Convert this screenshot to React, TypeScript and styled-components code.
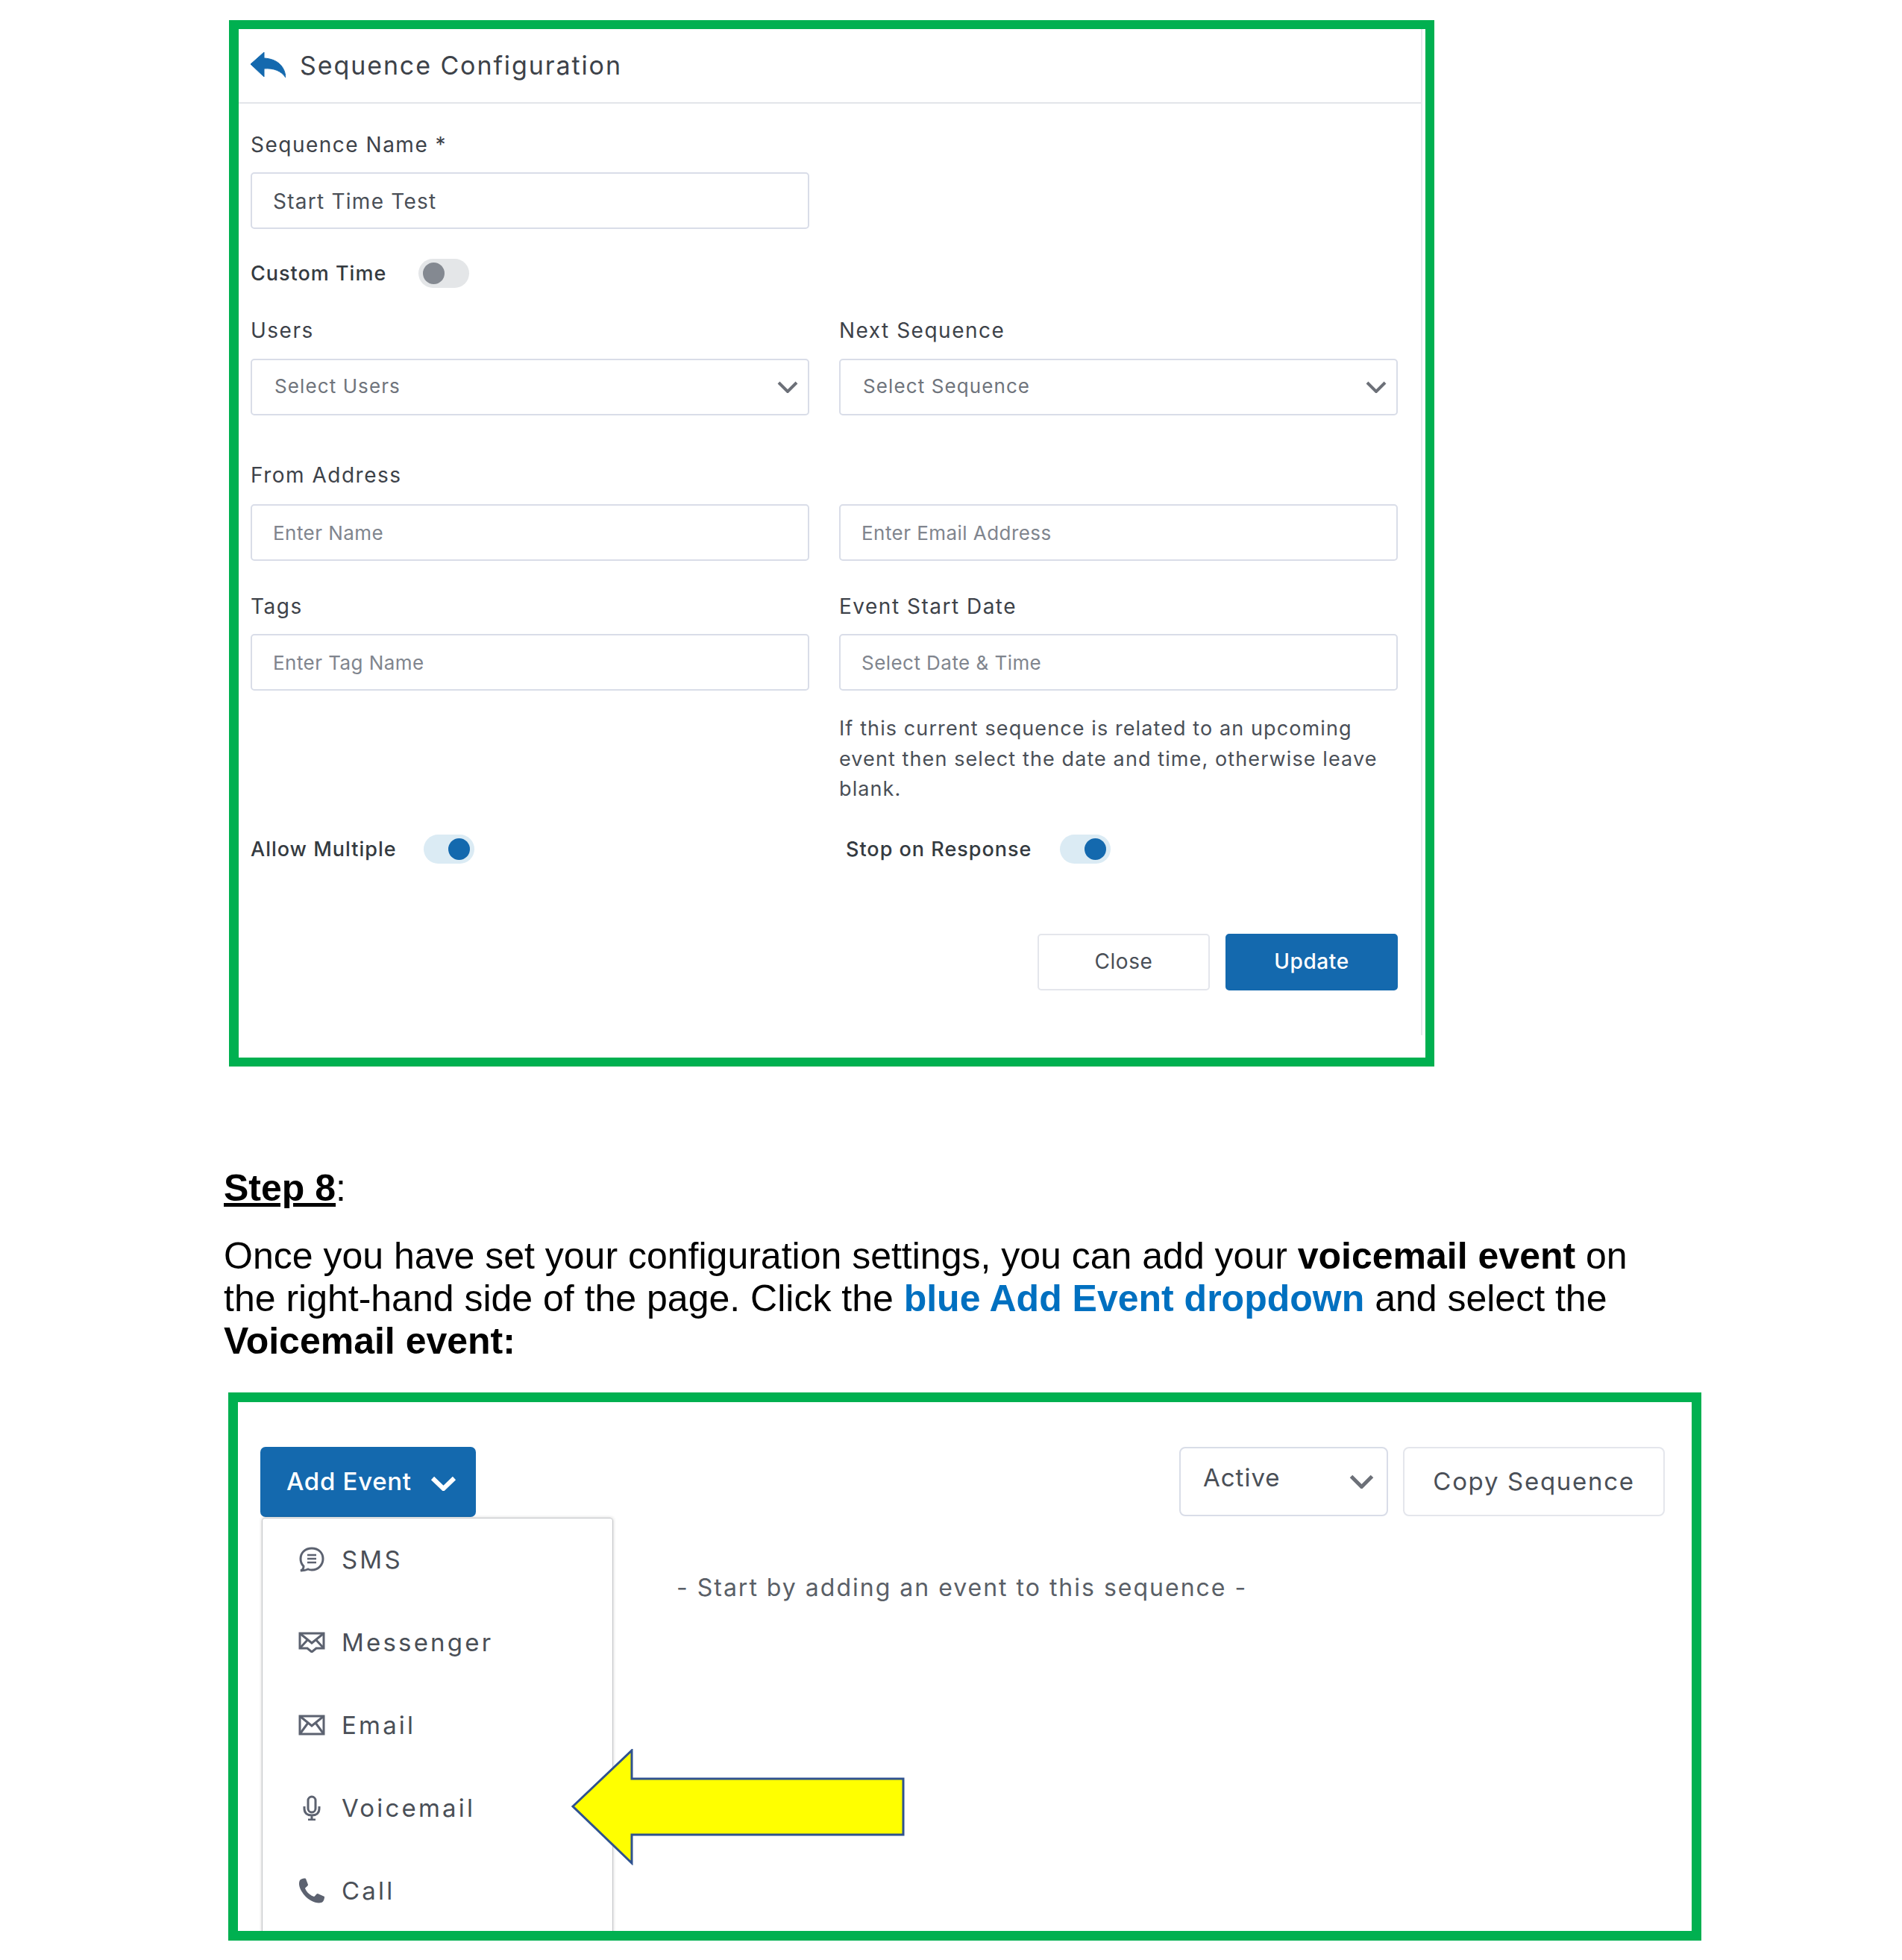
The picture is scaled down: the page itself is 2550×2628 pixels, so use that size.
import React from 'react';
import styled, { createGlobalStyle } from 'styled-components';

const GlobalStyle = createGlobalStyle`
  html, body {
    margin: 0;
    padding: 0;
    background: #fff;
  }
  * {
    box-sizing: border-box;
  }
`;

const Page = styled.div`
  width: 2550px;
  height: 2628px;
  padding-top: 27px;
  overflow: hidden;
  font-family: Inter, 'Noto Sans', sans-serif;
  color: #343a40;
`;

const ConfigShot = styled.section`
  width: 1616px;
  height: 1403px;
  margin-left: 307px;
  border: 12px solid #00b050;
  border-left-width: 13px;
`;

const Panel = styled.div`
  width: 1587px;
  height: 1349px;
  border-right: 2px solid #e6e8ec;
`;

const Header = styled.header`
  height: 100px;
  display: flex;
  align-items: center;
  gap: 19px;
  padding: 0 0 2px 16px;
  border-bottom: 2px solid #e2e5e9;
`;

const Title = styled.h2`
  margin: 0;
  font-size: 34px;
  font-weight: 400;
  letter-spacing: 1.9px;
  color: #3d4249;
`;

const Form = styled.div`
  padding: 36px 0 0 16px;
`;

const Row = styled.div<{ $top?: number }>`
  display: grid;
  grid-template-columns: 749px 749px;
  column-gap: 40px;
  margin-top: ${({ $top }) => $top ?? 0}px;
`;

const Label = styled.label<{ $gap?: number }>`
  display: block;
  height: 38px;
  line-height: 38px;
  margin-bottom: ${({ $gap }) => $gap ?? 18}px;
  font-size: 28px;
  letter-spacing: 1.5px;
  color: #3d4249;
`;

const Control = styled.div<{ $select?: boolean }>`
  height: 76px;
  display: flex;
  align-items: center;
  justify-content: space-between;
  padding: 0 13px 0 ${({ $select }) => ($select ? 30 : 28)}px;
  border: 2px solid #d9dde8;
  border-radius: 5px;
  background: #fff;
`;

const ControlValue = styled.span`
  margin-top: 2px;
  font-size: 28px;
  letter-spacing: 1.25px;
  color: #4a4f57;
`;

const Placeholder = styled.span`
  font-size: 26px;
  letter-spacing: 0.45px;
  color: #80858e;
`;

const SelectText = styled(Placeholder)`
  letter-spacing: 1.1px;
  color: #6f747c;
  margin-bottom: 4px;
`;

const SwitchRow = styled.div<{ $indent?: number; $gap: number }>`
  height: 39px;
  display: flex;
  align-items: center;
  gap: ${({ $gap }) => $gap}px;
  padding-left: ${({ $indent }) => $indent ?? 0}px;
`;

const SwitchLabel = styled.span`
  font-size: 27px;
  font-weight: 500;
  letter-spacing: 1px;
  color: #343a40;
`;

const Track = styled.span<{ $on?: boolean }>`
  width: 68px;
  height: 39px;
  display: flex;
  align-items: center;
  justify-content: ${({ $on }) => ($on ? 'flex-end' : 'flex-start')};
  padding: 0 6px;
  border-radius: 20px;
  background: ${({ $on }) => ($on ? '#dbebf4' : '#e4e6e8')};
`;

const Knob = styled.span<{ $on?: boolean }>`
  width: 29px;
  height: 29px;
  border-radius: 50%;
  background: ${({ $on }) => ($on ? '#1469ae' : '#848991')};
`;

const Hint = styled.p`
  grid-column: 2;
  margin: 0;
  font-size: 27px;
  line-height: 40.5px;
  letter-spacing: 1.1px;
  color: #4a4f57;
`;

const Actions = styled.div`
  display: flex;
  justify-content: flex-end;
  gap: 21px;
  margin: 94px 31px 0 0;
`;

const Button = styled.button<{ $primary?: boolean }>`
  width: 231px;
  height: 76px;
  padding: 0 0 2px;
  font-family: inherit;
  font-size: 28px;
  font-weight: ${({ $primary }) => ($primary ? 500 : 400)};
  letter-spacing: 0.6px;
  color: ${({ $primary }) => ($primary ? '#fff' : '#4a4f57')};
  background: ${({ $primary }) => ($primary ? '#1469ae' : '#fff')};
  border: 2px solid ${({ $primary }) => ($primary ? '#1469ae' : '#e4e6ec')};
  border-radius: 5px;
`;

const Copy = styled.div`
  margin: 0 0 0 300px;
  font-family: 'Liberation Sans', Arial, sans-serif;
  font-size: 50px;
  line-height: 57px;
  color: #000;
`;

const StepTitle = styled.p`
  margin: 135px 0 34px;
`;

const StepName = styled.strong`
  text-decoration: underline;
`;

const Body = styled.p`
  margin: 0;
`;

const BlueText = styled.strong`
  color: #0070c0;
`;

const EventShot = styled.section`
  position: relative;
  width: 1975px;
  height: 735px;
  margin: 40px 0 0 306px;
  border: 13px solid #00b050;
  overflow: hidden;
`;

const Toolbar = styled.div`
  display: flex;
  justify-content: space-between;
  padding: 60px 36px 0 30px;
`;

const AddButton = styled.button`
  width: 289px;
  height: 94px;
  display: flex;
  align-items: center;
  gap: 25px;
  padding: 0 0 3px 35px;
  font-family: inherit;
  font-size: 33px;
  font-weight: 500;
  letter-spacing: 0.7px;
  color: #fff;
  background: #1469ae;
  border: 0;
  border-radius: 7px;

  svg {
    margin-top: 6px;
  }
`;

const ToolbarRight = styled.div`
  display: flex;
  gap: 20px;
`;

const StatusSelect = styled.div`
  width: 280px;
  height: 93px;
  display: flex;
  align-items: center;
  justify-content: space-between;
  padding: 0 17px 0 30px;
  border: 2px solid #d9dde8;
  border-radius: 8px;
`;

const StatusValue = styled.span`
  margin-bottom: 12px;
  font-size: 33px;
  letter-spacing: 1px;
  color: #4a4f57;
`;

const CopyButton = styled.button`
  width: 351px;
  height: 93px;
  padding: 0 0 2px;
  font-family: inherit;
  font-size: 33px;
  letter-spacing: 1.7px;
  color: #4a4f57;
  background: #fff;
  border: 2px solid #e4e6ec;
  border-radius: 8px;
`;

const Content = styled.div`
  display: flex;
  padding-left: 32px;
`;

const Menu = styled.ul`
  width: 471px;
  height: 560px;
  flex: none;
  margin: 1px 0 0;
  padding: 0;
  list-style: none;
  border: 1px solid #c4c6c9;
  border-radius: 4px 4px 0 0;
  box-shadow: 0 0 4px rgba(0, 0, 0, 0.2);
`;

const MenuItem = styled.li`
  height: 111px;
  display: flex;
  align-items: center;
  padding: 0 0 2px 48px;
  font-size: 33px;
  letter-spacing: 3.2px;
  color: #4a4f57;
`;

const MenuIcon = styled.span`
  width: 36px;
  margin-right: 22px;
  display: flex;
  justify-content: center;
  color: #5c6270;
`;

const EmptyText = styled.p`
  margin: 75px 0 0 85px;
  font-size: 32px;
  letter-spacing: 2px;
  color: #5a5f67;
`;

const Arrow = styled.svg`
  position: absolute;
  left: 447px;
  top: 465px;
`;

const Chevron: React.FC<{ width: number; height: number; weight: number; color: string }> = ({ width, height, weight, color }) => (
  <svg width={width} height={height} viewBox={`0 0 ${width} ${height}`} fill="none">
    <path d={`M${weight / 2} ${weight / 2}L${width / 2} ${height - weight / 2}L${width - weight / 2} ${weight / 2}`} stroke={color} strokeWidth={weight} />
  </svg>
);

const BackIcon = () => (
  <svg width="47" height="35" viewBox="0 0 47 35">
    <path d="M0 16L18 0V8C36 9 46 19 47 34C41 25 31 21 18 22V33Z" fill="#1469ae" stroke="#1469ae" strokeWidth="1" strokeLinejoin="round" />
  </svg>
);

const SmsIcon = () => (
  <svg width="36" height="34" viewBox="0 0 36 34" fill="none" stroke="currentColor" strokeWidth="3">
    <path d="M18 2C9 2 3 8 3 16C3 21 5 24 7 26C7 29 6 31 3 32C8 32 11 31 13 30C15 31 16 31 18 31C27 31 33 24 33 16C33 8 27 2 18 2Z" />
    <path d="M12 11H24M12 16H24M12 21H24" strokeWidth="2.5" />
  </svg>
);

const EnvelopeIcon: React.FC<{ notch?: boolean }> = ({ notch }) => (
  <svg width="36" height="28" viewBox="0 0 36 28" fill="none" stroke="currentColor" strokeWidth="3">
    <path d={notch ? 'M2 2H34V22H24L18 27L12 22H2Z' : 'M2 2H34V26H2Z'} />
    <path d={notch ? 'M2 2L18 15L34 2M2 22L13 10M34 22L23 10' : 'M2 2L18 15L34 2M2 26L13 11M34 26L23 11'} />
  </svg>
);

const MicIcon = () => (
  <svg width="26" height="34" viewBox="0 0 26 34" fill="none" stroke="currentColor" strokeWidth="3">
    <rect x="8" y="2" width="10" height="21" rx="5" />
    <path d="M3 15V18C3 24 7 27 13 27C19 27 23 24 23 18V15M13 27V33M8 33H18" />
  </svg>
);

const PhoneIcon = () => (
  <svg width="36" height="34" viewBox="0 0 36 34" fill="currentColor">
    <path d="M2 3C4 1 8 0 10 1L13 9C13 11 10 12 9 14C11 19 15 23 21 25C23 24 24 21 26 21L35 25C35 28 34 32 31 33C24 35 14 30 8 23C3 17 -1 9 2 3Z" />
  </svg>
);

const menuItems: { label: string; icon: React.ReactNode }[] = [
  { label: 'SMS', icon: <SmsIcon /> },
  { label: 'Messenger', icon: <EnvelopeIcon notch /> },
  { label: 'Email', icon: <EnvelopeIcon /> },
  { label: 'Voicemail', icon: <MicIcon /> },
  { label: 'Call', icon: <PhoneIcon /> },
];

export default function App() {
  return (
    <>
      <GlobalStyle />
      <Page>
        <ConfigShot>
          <Panel>
            <Header>
              <BackIcon />
              <Title>Sequence Configuration</Title>
            </Header>
            <Form>
              <Row>
                <div>
                  <Label>Sequence Name *</Label>
                  <Control>
                    <ControlValue>Start Time Test</ControlValue>
                  </Control>
                </div>
              </Row>
              <Row $top={40}>
                <SwitchRow $gap={43}>
                  <SwitchLabel>Custom Time</SwitchLabel>
                  <Track>
                    <Knob />
                  </Track>
                </SwitchRow>
              </Row>
              <Row $top={38}>
                <div>
                  <Label $gap={19}>Users</Label>
                  <Control $select>
                    <SelectText>Select Users</SelectText>
                    <Chevron width={28} height={16} weight={4} color="#6c7078" />
                  </Control>
                </div>
                <div>
                  <Label $gap={19}>Next Sequence</Label>
                  <Control $select>
                    <SelectText>Select Sequence</SelectText>
                    <Chevron width={28} height={16} weight={4} color="#6c7078" />
                  </Control>
                </div>
              </Row>
              <Row $top={61}>
                <div>
                  <Label $gap={20}>From Address</Label>
                  <Control>
                    <Placeholder>Enter Name</Placeholder>
                  </Control>
                </div>
                <div>
                  <Label $gap={20} aria-hidden="true" />
                  <Control>
                    <Placeholder>Enter Email Address</Placeholder>
                  </Control>
                </div>
              </Row>
              <Row $top={42}>
                <div>
                  <Label>Tags</Label>
                  <Control>
                    <Placeholder>Enter Tag Name</Placeholder>
                  </Control>
                </div>
                <div>
                  <Label>Event Start Date</Label>
                  <Control>
                    <Placeholder>Select Date &amp; Time</Placeholder>
                  </Control>
                </div>
              </Row>
              <Row $top={31}>
                <Hint>If this current sequence is related to an upcoming event then select the date and time, otherwise leave blank.</Hint>
              </Row>
              <Row $top={40}>
                <SwitchRow $gap={36}>
                  <SwitchLabel>Allow Multiple</SwitchLabel>
                  <Track $on>
                    <Knob $on />
                  </Track>
                </SwitchRow>
                <SwitchRow $indent={9} $gap={38}>
                  <SwitchLabel>Stop on Response</SwitchLabel>
                  <Track $on>
                    <Knob $on />
                  </Track>
                </SwitchRow>
              </Row>
            </Form>
            <Actions>
              <Button>Close</Button>
              <Button $primary>Update</Button>
            </Actions>
          </Panel>
        </ConfigShot>

        <Copy>
          <StepTitle>
            <StepName>Step 8</StepName>:
          </StepTitle>
          <Body>
            Once you have set your configuration settings, you can add your <strong>voicemail event</strong> on
            <br />
            the right-hand side of the page. Click the <BlueText>blue Add Event dropdown</BlueText> and select the
            <br />
            <strong>Voicemail event:</strong>
          </Body>
        </Copy>

        <EventShot>
          <Toolbar>
            <AddButton>
              Add Event
              <Chevron width={35} height={20} weight={6} color="#fff" />
            </AddButton>
            <ToolbarRight>
              <StatusSelect>
                <StatusValue>Active</StatusValue>
                <Chevron width={33} height={19} weight={5} color="#6c7078" />
              </StatusSelect>
              <CopyButton>Copy Sequence</CopyButton>
            </ToolbarRight>
          </Toolbar>
          <Content>
            <Menu>
              {menuItems.map((item) => (
                <MenuItem key={item.label}>
                  <MenuIcon>{item.icon}</MenuIcon>
                  {item.label}
                </MenuItem>
              ))}
            </Menu>
            <EmptyText>- Start by adding an event to this sequence -</EmptyText>
          </Content>
          <Arrow width="448" height="156" viewBox="0 0 448 156">
            <path d="M2 77L81 2V40H445V115H81V153Z" fill="#ffff00" stroke="#2f528f" strokeWidth="3" />
          </Arrow>
        </EventShot>
      </Page>
    </>
  );
}
